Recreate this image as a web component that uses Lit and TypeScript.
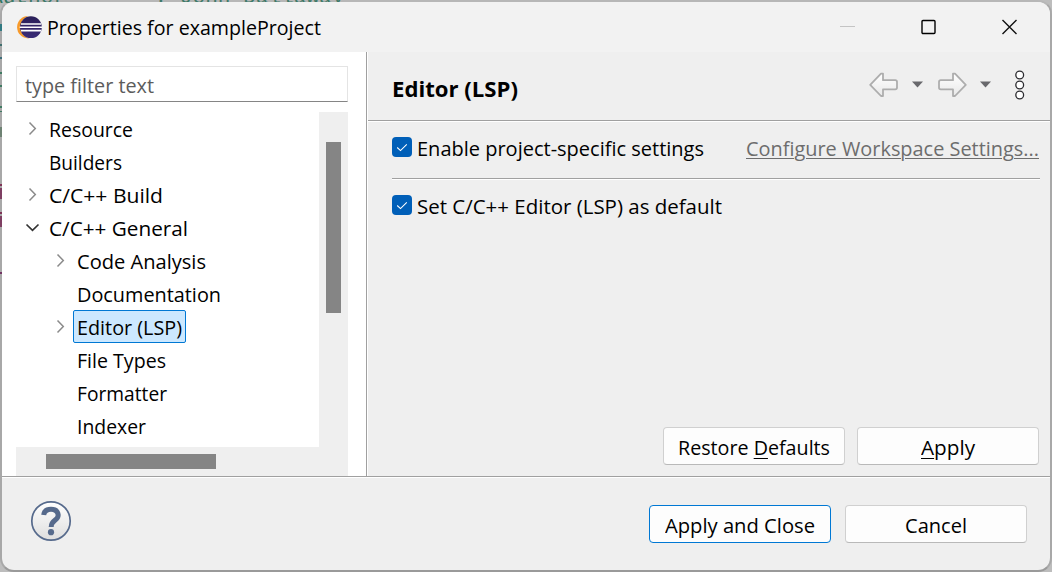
import { LitElement, html, css, svg, nothing } from "lit";
import { customElement, property } from "lit/decorators.js";

@customElement("fit-text")
class FitText extends LitElement {
  @property({ type: Number }) width = 0;
  static styles = css`
    :host { display: inline-block; white-space: pre; flex: none; }
    .run { display: inline-block; transform-origin: 0 50%; }
    :host(.link) .run { text-decoration: underline; text-decoration-thickness: 1px; text-underline-offset: 2px; }
  `;
  render() {
    return html`<span class="run"><slot></slot></span>`;
  }
  firstUpdated() {
    const run = this.renderRoot.querySelector(".run") as HTMLElement;
    const natural = run.getBoundingClientRect().width;
    if (!natural || !this.width) return;
    run.style.transform = `scaleX(${this.width / natural})`;
    this.style.width = `${this.width}px`;
  }
}

interface Node { label: string; width: number; depth: number; state?: "open" | "closed"; selected?: boolean; }

const NODES: Node[] = [
  { label: "Resource", width: 84, depth: 0, state: "closed" },
  { label: "Builders", width: 73, depth: 0 },
  { label: "C/C++ Build", width: 114, depth: 0, state: "closed" },
  { label: "C/C++ General", width: 139, depth: 0, state: "open" },
  { label: "Code Analysis", width: 129, depth: 1, state: "closed" },
  { label: "Documentation", width: 144, depth: 1 },
  { label: "Editor (LSP)", width: 105, depth: 1, state: "closed", selected: true },
  { label: "File Types", width: 89, depth: 1 },
  { label: "Formatter", width: 90, depth: 1 },
  { label: "Indexer", width: 69, depth: 1 },
];

const MARKS = [
  { y: 24, h: 7, c: "#1f7f8a" }, { y: 44, h: 2, c: "#2f6f6f" }, { y: 57, h: 2, c: "#2f6f7f" },
  { y: 72, h: 2, c: "#2f7f5f" }, { y: 85, h: 2, c: "#2f7f5f" }, { y: 106, h: 2, c: "#2f7f5f" },
  { y: 111, h: 1, c: "#2f7f5f" }, { y: 127, h: 10, c: "#6f8a76" }, { y: 184, h: 2, c: "#85204f" },
  { y: 188, h: 11, c: "#85305f" }, { y: 212, h: 2, c: "#85204f" }, { y: 216, h: 11, c: "#85305f" },
  { y: 272, h: 2, c: "#75205f" },
];

const backArrow = svg`<path d="M1.2 12.8 12 1.6h2v6.6h12.2q1.8 0 1.8 1.8v5.6q0 1.8-1.8 1.8H14v6.6h-2z"
  fill="url(#arrowFill)" stroke="#adadad" stroke-width="1.8" stroke-linejoin="round"/>`;

@customElement("app-root")
class AppRoot extends LitElement {
  static styles = css`
    :host {
      display: block; position: relative; width: 1052px; height: 572px; overflow: hidden;
      background: #bdbdbd; color: #000;
      font: 20.8px/33px "Open Sans", "Noto Sans", sans-serif;
    }
    * { box-sizing: border-box; }
    svg { display: block; flex: none; }
    .behind { position: absolute; inset: 0; }
    .code { position: absolute; left: -10px; top: -13px; font: 21.1px/20px "Liberation Mono", monospace; color: #2f7560; white-space: pre; }
    .window {
      position: relative; width: 1052px; height: 572px; border: 2px solid rgba(110, 110, 110, .25);
      border-top-color: rgba(150, 150, 150, .15); border-bottom-color: rgba(90, 90, 90, .35); border-radius: 14px; overflow: hidden;
      background: #efefef; background-clip: padding-box;
      display: flex; flex-direction: column;
    }
    .title { height: 50px; background: #f2f2f2; display: flex; align-items: center; padding: 0 32px 0 15px; flex: none; }
    .title fit-text { margin: 1px auto 0 5px; }
    .controls { display: flex; width: 180px; justify-content: space-between; }
    .body { display: flex; height: 424px; flex: none; }
    .side { width: 364px; background: #fff; padding: 14px 18px 0 14px; flex: none; }
    .filter { height: 36px; width: 332px; border: 1px solid #e4e4e4; border-bottom-color: #858585; color: #5c5c5c; padding: 2px 8px; line-height: 32px; }
    .tree { display: flex; margin-top: 10px; height: 335px; }
    .rows { width: 303px; }
    .row { display: flex; height: 33px; align-items: center; padding-left: 8px; }
    .deep { padding-left: 36px; }
    .twisty { width: 17px; margin-right: 4px; flex: none; display: flex; justify-content: center; }
    .label { height: 33px; padding: 0 3px; border: 1px solid transparent; line-height: 32px; display: flex; }
    .selected { background: #cce8ff; border-color: #0078d4; border-radius: 2px; }
    .vbar { width: 29px; background: #efefef; padding: 30px 7px 0; }
    .vthumb { height: 171px; background: #858585; width: 15px; }
    .hbar { width: 332px; height: 29px; background: #efefef; padding: 7px 0 0 30px; }
    .hthumb { height: 15px; width: 170px; background: #858585; }
    .main { flex: 1; border-left: 1px solid #a0a0a0; box-shadow: inset 1px 0 #fff; display: flex; flex-direction: column; }
    .head { height: 69px; border-bottom: 1px solid #a0a0a0; display: flex; align-items: center; padding: 4px 24px 0 24px; font-weight: 700; margin-left: 1px; }
    .head fit-text { margin: 2px auto 0 0; }
    .nav { display: flex; align-items: center; height: 30px; margin-top: -7px; }
    .content { border-top: 1px solid #fff; padding: 10px 10px 0 25px; flex: 1; display: flex; flex-direction: column; }
    .line { display: flex; align-items: center; height: 34px; }
    .line fit-text { margin-top: -2px; }
    .box { width: 20px; height: 20px; border-radius: 4px; background: #005fb8; margin: -4px 5px 0 0; }
    .line .link { color: #6d6d6d; margin-left: auto; margin-right: 1px; }
    .rule { height: 2px; background: #a0a0a0; border-bottom: 1px solid #fff; margin: 12px 0 10px; }
    .actions { display: flex; gap: 12px; margin-top: auto; padding: 0 1px 11px 0; justify-content: flex-end; }
    .button { width: 182px; height: 38px; border: 1px solid #d0d0d0; border-bottom-color: #b9b9b9; border-radius: 4px; background: #fdfdfd; display: flex; justify-content: center; line-height: 38px; }
    .default { border-color: #0078d4; }
    .key { text-decoration: underline; text-decoration-thickness: 1px; text-underline-offset: 3px; }
    .foot { flex: 1; border-top: 1px solid #a0a0a0; box-shadow: inset 0 1px #fff; display: flex; align-items: center; gap: 14px; padding: 0 23px 0 28px; }
    .help { margin: -6px auto 0 0; }
  `;

  private twisty(state?: string) {
    if (!state) return nothing;
    return state === "open"
      ? html`<svg width="15" height="9" viewBox="0 0 15 9"><path d="M1.5 1.5 7.5 7.3 13.5 1.5" fill="none" stroke="#333" stroke-width="1.7"/></svg>`
      : html`<svg width="9" height="15" viewBox="0 0 9 15"><path d="M1.5 1.5 7.3 7.5 1.5 13.5" fill="none" stroke="#8a8a8a" stroke-width="1.5"/></svg>`;
  }

  private check(label: string, width: number) {
    return html`<span class="box"><svg width="20" height="20"><path d="M5.2 10.5 8.5 13.6 14.8 7.4" fill="none" stroke="#fff" stroke-width="1.1"/></svg></span><fit-text width=${width}>${label}</fit-text>`;
  }

  private drop() {
    return html`<svg width="11" height="7"><path d="M0 .5h11L5.5 6.5z" fill="#68686c"/></svg>`;
  }

  render() {
    return html`
      <div class="behind">
        <div class="code">Author       : John Dallaway</div>
        <svg width="2" height="300">${MARKS.map((m) => svg`<rect x="0" y=${m.y} width="2" height=${m.h} fill=${m.c} />`)}</svg>
      </div>
      <div class="window">
        <div class="title">
          <svg width="25" height="25" viewBox="0 0 25 25">
            <defs><linearGradient id="ball" x1="0" y1="0" x2="0" y2="1"><stop stop-color="#2a2058"/><stop offset="1" stop-color="#3a2b78"/></linearGradient></defs>
            <circle cx="11.3" cy="12.2" r="11.2" fill="#f79a2b"/>
            <circle cx="15.2" cy="12.2" r="11.7" fill="#f2f2f2"/>
            <circle cx="13.9" cy="12.2" r="10.9" fill="url(#ball)"/>
            <path d="M4 9h20M2.6 12.3h22.4M4 15.6h20" stroke="#fff" stroke-width="1.6"/>
          </svg>
          <fit-text width="274">Properties for exampleProject</fit-text>
          <div class="controls">
            <svg width="17" height="17"><path d="M2 7.5h15" stroke="#c4c4c4"/></svg>
            <svg width="17" height="17"><rect x="2" y="1.5" width="13" height="13" rx="1" fill="none" stroke="#000" stroke-width="1.4"/></svg>
            <svg width="17" height="17"><path d="M1.5 1 15.5 15M15.5 1 1.5 15" stroke="#111" stroke-width="1.4"/></svg>
          </div>
        </div>
        <div class="body">
          <div class="side">
            <div class="filter"><fit-text width="129">type filter text</fit-text></div>
            <div class="tree">
              <div class="rows">
                ${NODES.map((n) => html`<div class="row ${n.depth ? "deep" : ""}"><span class="twisty">${this.twisty(n.state)}</span><span class="label ${n.selected ? "selected" : ""}"><fit-text width=${n.width}>${n.label}</fit-text></span></div>`)}
              </div>
              <div class="vbar"><div class="vthumb"></div></div>
            </div>
            <div class="hbar"><div class="hthumb"></div></div>
          </div>
          <div class="main">
            <div class="head">
              <fit-text width="126">Editor (LSP)</fit-text>
              <div class="nav">
                <svg width="30" height="26" viewBox="0 0 30 26"><defs><linearGradient id="arrowFill" x1="0" y1="0" x2="0" y2="1"><stop stop-color="#fff"/><stop offset="1" stop-color="#e8e8e8"/></linearGradient></defs>${backArrow}</svg>
                <svg width="13" height="1"></svg>${this.drop()}<svg width="15" height="1"></svg>
                <svg width="30" height="26" viewBox="0 0 30 26"><g transform="translate(29 0) scale(-1 1)">${backArrow}</g></svg>
                <svg width="12" height="1"></svg>${this.drop()}<svg width="23" height="1"></svg>
                <svg width="12" height="30"><g fill="#fff" stroke="#2c2c30" stroke-width="1.3"><circle cx="5.7" cy="5" r="3.9"/><circle cx="5.7" cy="15" r="3.9"/><circle cx="5.7" cy="25" r="3.9"/></g></svg>
              </div>
            </div>
            <div class="content">
              <div class="line">${this.check("Enable project-specific settings", 287)}<fit-text class="link" width="293">Configure Workspace Settings...</fit-text></div>
              <div class="rule"></div>
              <div class="line">${this.check("Set C/C++ Editor (LSP) as default", 305)}</div>
              <div class="actions">
                <div class="button"><fit-text width="152">Restore <span class="key">D</span>efaults</fit-text></div>
                <div class="button"><fit-text width="54"><span class="key">A</span>pply</fit-text></div>
              </div>
            </div>
          </div>
        </div>
        <div class="foot">
          <svg class="help" width="42" height="42" viewBox="0 0 42 42">
            <defs><linearGradient id="helpFill" x1="0" y1="0" x2="0" y2="1"><stop stop-color="#fff"/><stop offset="1" stop-color="#dedede"/></linearGradient></defs>
            <circle cx="21" cy="21" r="19.2" fill="url(#helpFill)" stroke="#566a8c" stroke-width="1.7"/>
            <path d="M13.7 15Q14.5 9.2 21 9.2T28.2 15Q28.2 18 24.8 20.4T21.2 27" fill="none" stroke="#566a8c" stroke-width="5"/>
            <circle cx="21" cy="32.2" r="3.1" fill="#566a8c"/>
          </svg>
          <div class="button default"><fit-text width="150">Apply and Close</fit-text></div>
          <div class="button"><fit-text width="62">Cancel</fit-text></div>
        </div>
      </div>`;
  }
}
